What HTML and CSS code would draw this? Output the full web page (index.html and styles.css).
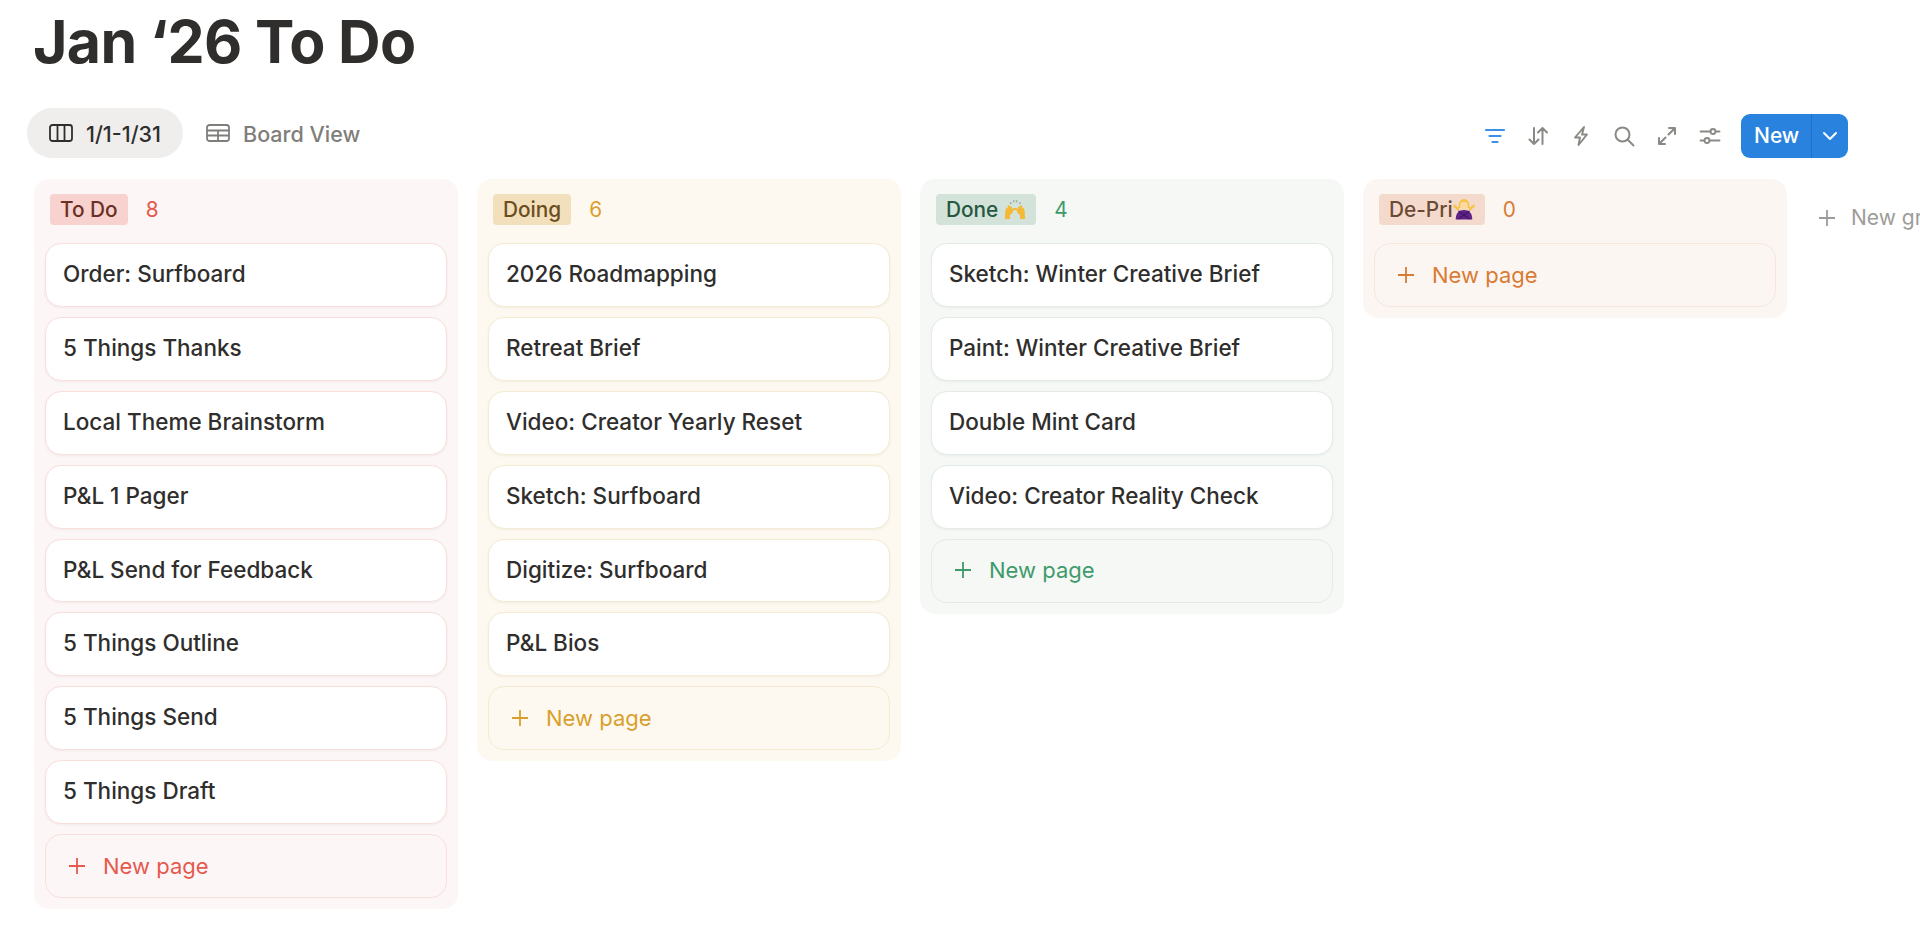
FILE: index.html
```html
<!DOCTYPE html>
<html lang="en">
<head>
<meta charset="utf-8">
<title>Jan ‘26 To Do</title>
<link rel="stylesheet" href="styles.css">
</head>
<body>
<h1 class="title">Jan ‘26 To Do</h1>
<div class="toolbar">
  <div class="tabs">
    <div class="tab tab-active">
      <svg class="tab-icon" viewBox="0 0 24 18" fill="none" stroke="currentColor" stroke-width="1.800"><rect x="1" y="1" width="22" height="16" rx="2.500"/><path d="M8.500 1v16M15.500 1v16"/></svg>
      <span>1/1-1/31</span>
    </div>
    <div class="tab">
      <svg class="tab-icon" viewBox="0 0 24 18" fill="none" stroke="currentColor" stroke-width="1.800"><rect x="1" y="1" width="22" height="16" rx="2.500"/><path d="M1 6.500h22M1 11.500h22M12 6.500v10.500"/></svg>
      <span>Board View</span>
    </div>
  </div>
  <div class="actions">
    <svg class="action action-on" viewBox="0 0 22 22" fill="none" stroke="currentColor" stroke-width="2.200" stroke-linecap="round"><path d="M2 5h18M5.500 11h11M8.500 17h5"/></svg>
    <svg class="action" viewBox="0 0 22 22" fill="none" stroke="currentColor" stroke-width="2" stroke-linecap="round" stroke-linejoin="round"><path d="M7 3v16M2.500 14.500 7 19l4.500-4.500M15.500 19V3M11 7.500 15.500 3 20 7.500"/></svg>
    <svg class="action" viewBox="0 0 22 22" fill="none" stroke="currentColor" stroke-width="1.900" stroke-linejoin="round"><path d="M14 2 5 12.500h5L8.500 20 17 9.500h-5z"/></svg>
    <svg class="action" viewBox="0 0 22 22" fill="none" stroke="currentColor" stroke-width="2" stroke-linecap="round"><circle cx="9.500" cy="9.500" r="7"/><path d="m14.500 14.500 6 6"/></svg>
    <svg class="action" viewBox="0 0 22 22" fill="none" stroke="currentColor" stroke-width="2" stroke-linecap="round" stroke-linejoin="round"><path d="M13 3h6v6M19 3l-6.500 6.500M9 19H3v-6M3 19l6.500-6.500"/></svg>
    <svg class="action" viewBox="0 0 22 22" fill="none" stroke="currentColor" stroke-width="1.800" stroke-linecap="round"><path d="M1.500 6.500h10M16.500 6.500h4M1.500 15.500h4M10.500 15.500h10"/><circle cx="14" cy="6.500" r="2.500"/><circle cx="8" cy="15.500" r="2.500"/></svg>
    <div class="new-button">
      <span class="new-label">New</span>
      <span class="new-arrow"><svg viewBox="0 0 16 10" fill="none" stroke="currentColor" stroke-width="2" stroke-linecap="round" stroke-linejoin="round"><path d="m2 2 6 6 6-6"/></svg></span>
    </div>
  </div>
</div>
<div class="board">
  <section class="column col-red">
    <header class="col-head"><span class="tag">To Do</span><span class="count">8</span></header>
    <div class="card"><span>Order: Surfboard</span></div>
    <div class="card"><span>5 Things Thanks</span></div>
    <div class="card"><span>Local Theme Brainstorm</span></div>
    <div class="card"><span>P&amp;L 1 Pager</span></div>
    <div class="card"><span>P&amp;L Send for Feedback</span></div>
    <div class="card"><span>5 Things Outline</span></div>
    <div class="card"><span>5 Things Send</span></div>
    <div class="card"><span>5 Things Draft</span></div>
    <div class="add"><svg class="plus" viewBox="0 0 18 18" fill="none" stroke="currentColor" stroke-width="1.800"><path d="M9 1v16M1 9h16"/></svg><span>New page</span></div>
  </section>
  <section class="column col-yellow">
    <header class="col-head"><span class="tag">Doing</span><span class="count">6</span></header>
    <div class="card"><span>2026 Roadmapping</span></div>
    <div class="card"><span>Retreat Brief</span></div>
    <div class="card"><span>Video: Creator Yearly Reset</span></div>
    <div class="card"><span>Sketch: Surfboard</span></div>
    <div class="card"><span>Digitize: Surfboard</span></div>
    <div class="card"><span>P&amp;L Bios</span></div>
    <div class="add"><svg class="plus" viewBox="0 0 18 18" fill="none" stroke="currentColor" stroke-width="1.800"><path d="M9 1v16M1 9h16"/></svg><span>New page</span></div>
  </section>
  <section class="column col-green">
    <header class="col-head"><span class="tag">Done<svg class="emoji emoji-hands" viewBox="0 0 24 24"><g fill="#f5b937"><path d="M1 23 1.500 13.500 3 10l.8 1.500L4.500 8 6 8l.6 1.500L8 9l1.500 3.500L9.500 16 6.500 18.500 6.500 23z"/><path d="M23 23 22.500 13.500 21 10l-.8 1.500L19.500 8 18 8l-.6 1.500L16 9l-1.500 3.500.0 3.500 3 2.500V23z"/></g><path fill="none" stroke="#f5b937" stroke-width="2.200" d="M8.500 14c2-2.500 5-2.500 7 0"/><path fill="#9ba3a0" d="M6.500 4.500h1.500v2H6.500zM10 2.500h1.500v2H10zM13 2.500h1.500v2H13zM16.500 4.500H18v2h-1.500z"/></svg></span><span class="count">4</span></header>
    <div class="card"><span>Sketch: Winter Creative Brief</span></div>
    <div class="card"><span>Paint: Winter Creative Brief</span></div>
    <div class="card"><span>Double Mint Card</span></div>
    <div class="card"><span>Video: Creator Reality Check</span></div>
    <div class="add"><svg class="plus" viewBox="0 0 18 18" fill="none" stroke="currentColor" stroke-width="1.800"><path d="M9 1v16M1 9h16"/></svg><span>New page</span></div>
  </section>
  <section class="column col-orange">
    <header class="col-head"><span class="tag">De-Pri<svg class="emoji" viewBox="0 0 24 24"><path fill="#f6c445" d="M6 9.500C6 4 8.500 1 12 1s6 3 6 8.500l1 1.500H5z"/><path fill="#5f2289" d="M3 23.500c0-7 3-10.500 9-10.500s9 3.500 9 10.500z"/><circle cx="12" cy="8.500" r="4.300" fill="#fbd9a0"/><path stroke="#f6c445" stroke-width="2.600" stroke-linecap="round" d="m1.500 8.500 4 4M22.500 8.500l-4 4"/><path stroke="#3d1360" stroke-width="1.200" d="m6 14 12 9M18 14 6 23"/></svg></span><span class="count">0</span></header>
    <div class="add"><svg class="plus" viewBox="0 0 18 18" fill="none" stroke="currentColor" stroke-width="1.800"><path d="M9 1v16M1 9h16"/></svg><span>New page</span></div>
  </section>
  <div class="new-group"><svg class="plus" viewBox="0 0 18 18" fill="none" stroke="currentColor" stroke-width="1.800"><path d="M9 1v16M1 9h16"/></svg><span>New group</span></div>
</div>
</body>
</html>
```
FILE: styles.css
```css
* { box-sizing: border-box; }
html, body { margin: 0; height: 100%; }
body {
  width: 1920px;
  height: 943px;
  overflow: hidden;
  background: #fff;
  color: #2f2e2c;
  font-family: Inter, "Liberation Sans", sans-serif;
  padding: 0 0 0 27px;
}
.title {
  margin: 0;
  padding: 6px 0 0 6px;
  height: 108px;
  font-size: 59px;
  line-height: 72px;
  font-weight: 700;
  letter-spacing: -0.65px;
}
.toolbar {
  display: flex;
  justify-content: space-between;
  align-items: center;
  width: 1821px;
  height: 50px;
}
.tabs { display: flex; align-items: center; gap: 1px; }
.tab {
  display: flex;
  align-items: center;
  gap: 13px;
  height: 50px;
  padding: 0 22px;
  border-radius: 25px;
  font-size: 21.5px;
  font-weight: 500;
  color: #7f7e7b;
}
.tab span { margin-top: 2px; }
.tab-active { background: #efeeed; color: #2f2e2c; }
.tab-icon { width: 24px; height: 18px; }
.actions { display: flex; align-items: center; gap: 21px; padding-top: 5px; }
.action { width: 22px; height: 22px; color: #8a8985; }
.action-on { color: #3d8ee6; }
.new-button {
  display: flex;
  height: 44px;
  margin-left: -1px;
  border-radius: 9px;
  overflow: hidden;
  background: #2882de;
  color: #fff;
  font-size: 21px;
  font-weight: 500;
}
.new-label { display: flex; align-items: center; width: 71px; padding-left: 13px; border-right: 1px solid #1f70c4; }
.new-arrow { display: flex; align-items: center; justify-content: center; width: 36px; }
.new-arrow svg { width: 16px; height: 10px; }
.board { display: flex; align-items: flex-start; gap: 19px; margin: 21px 0 0 7px; }
.column {
  flex: 0 0 424px;
  display: flex;
  flex-direction: column;
  gap: 10px;
  padding: 0 11px 11px;
  border-radius: 15px;
}
.col-head { display: flex; align-items: center; gap: 18px; height: 64px; padding: 0 5px 4px; margin-bottom: -10px; }
.tag {
  display: flex;
  align-items: center;
  height: 31px;
  padding: 0 10px;
  border-radius: 4px;
  font-size: 20.8px;
  font-weight: 500;
  white-space: nowrap;
}
.count { font-size: 20.8px; }
.emoji { width: 22px; height: 24px; }
.emoji-hands { margin-left: 6px; }
.card {
  display: flex;
  align-items: center;
  height: 63.9px;
  padding: 0 17px 3px;
  border-radius: 16px;
  background: #fff;
  border: 1.500px solid;
  font-size: 22.5px;
  font-weight: 500;
  box-shadow: 0 1px 3px rgba(0, 0, 0, .05);
}
.add {
  display: flex;
  align-items: center;
  gap: 17px;
  height: 64px;
  padding: 0 22px 1px;
  border-radius: 16px;
  border: 1.500px solid;
  font-size: 22px;
}
.plus { width: 18px; height: 18px; flex: none; }
.col-red { background: #fdf6f6; }
.col-red .tag { background: #f8d2cf; color: #6b3024; }
.col-red .count, .col-red .add span, .col-red .plus { color: #e5594f; }
.col-red .card, .col-red .add { border-color: #f9dfdc; }
.col-yellow { background: #fdf9f0; }
.col-yellow .tag { background: #f2dfbb; color: #6b4e20; }
.col-yellow .count, .col-yellow .add span, .col-yellow .plus { color: #d99f2c; }
.col-yellow .card, .col-yellow .add { border-color: #f5ebd2; }
.col-green { background: #f5f8f5; }
.col-green .tag { background: #d3e3d9; color: #26573f; }
.col-green .count, .col-green .add span, .col-green .plus { color: #3f9a6c; }
.col-green .card, .col-green .add { border-color: #e2ebe5; }
.col-orange { background: #fcf6f3; }
.col-orange .tag { background: #f3dacd; color: #6b4a33; }
.col-orange .count, .col-orange .add span, .col-orange .plus { color: #d97b33; }
.col-orange .card, .col-orange .add { border-color: #f8e6dc; }
.new-group {
  display: flex;
  align-items: center;
  gap: 15px;
  margin: 26px 0 0 12px;
  font-size: 21px;
  color: #9d9c99;
  white-space: nowrap;
}
```
